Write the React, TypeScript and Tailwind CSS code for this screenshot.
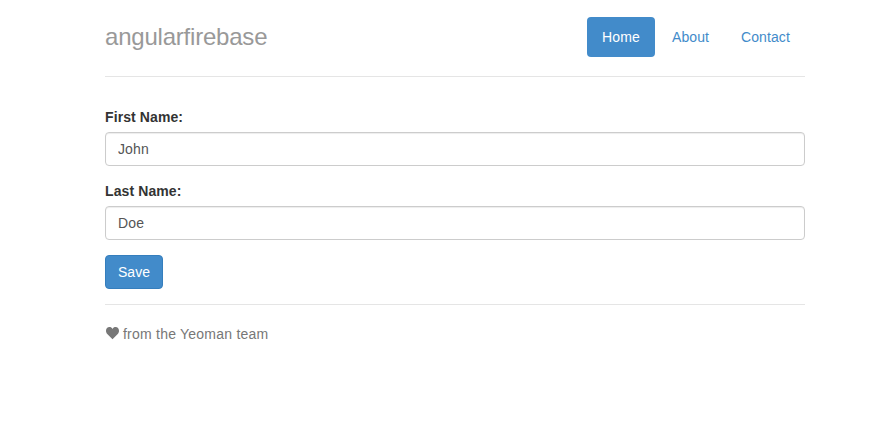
import { useState } from "react";

function Field({ id, label, initial }: { id: string; label: string; initial: string }) {
  const [value, setValue] = useState(initial);
  return (
    <div className="mb-[15px]">
      <label htmlFor={id} className="mb-[5px] block font-bold tracking-[0.1px] text-[#333]">
        {label}
      </label>
      <input
        id={id}
        value={value}
        onChange={(e) => setValue(e.target.value)}
        className="block h-[34px] w-full rounded border border-[#ccc] bg-white px-3 py-1.5 tracking-[0.12px] text-[#555] shadow-[inset_0_1px_1px_rgba(0,0,0,0.075)] outline-none"
      />
    </div>
  );
}

export default function App() {
  return (
    <div className="min-h-screen bg-white font-['Liberation_Sans',Arial,sans-serif] text-[14px] leading-[20px] text-[#333]">
      <div className="ml-[105px] w-[700px]">
        <header className="mb-[30px] flex items-start justify-between border-b border-[#e5e5e5] pt-[17px] pb-[19px]">
          <h3 className="text-[24px] leading-[40px] font-normal tracking-[-0.21px] text-[#999]">angularfirebase</h3>
          <nav className="flex gap-0.5 text-center">
            <a href="#" className="w-[68px] rounded bg-[#428bca] py-[10px] tracking-[0.15px] text-white">Home</a>
            <a href="#" className="w-[67px] rounded py-[10px] tracking-[0.1px] text-[#428bca]">About</a>
            <a href="#" className="w-[79px] rounded py-[10px] tracking-[0.1px] text-[#428bca]">Contact</a>
          </nav>
        </header>
        <form onSubmit={(e) => e.preventDefault()}>
          <Field id="first" label="First Name:" initial="John" />
          <Field id="last" label="Last Name:" initial="Doe" />
          <button className="block h-[34px] w-[58px] rounded border border-[#357ebd] bg-[#428bca] text-white">
            Save
          </button>
        </form>
        <footer className="mt-[15px] flex items-start border-t border-[#e5e5e5] pt-[19px] text-[#777]">
          <svg viewBox="0 0 14 14" className="mt-[2px] mr-[3px] ml-[1px] h-[14px] w-[14px]" fill="currentColor" aria-hidden="true">
            <path d="M6.5 13.2 L1.5 8.2 C.4 7 0 6 0 4.7 C0 2.4 1.5 1 3.4 1 C4.8 1 5.8 1.6 6.5 2.9 C7.2 1.6 8.2 1 9.6 1 C11.5 1 13 2.4 13 4.7 C13 6 12.6 7 11.5 8.2Z" />
          </svg>
          <p className="tracking-[0.23px]">from the Yeoman team</p>
        </footer>
      </div>
    </div>
  );
}
